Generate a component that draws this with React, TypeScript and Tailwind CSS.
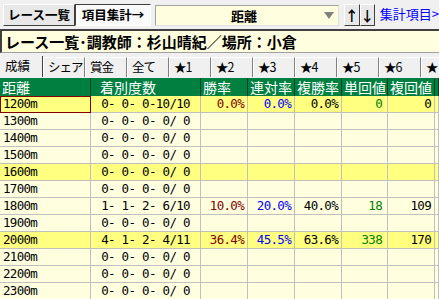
import React from "react";

const JP = "'Noto Sans CJK JP', sans-serif";
const MONO = "'DejaVu Sans Mono', 'Noto Sans CJK JP', monospace";

type Row = {
  d: string;
  c: string;
  w?: string;
  r?: string;
  f?: string;
  t?: string;
  fu?: string;
  hi?: boolean;
};

const rows: Row[] = [
  { d: "1200m", c: "0- 0- 0-10/10", w: "0.0%", r: "0.0%", f: "0.0%", t: "0", fu: "0", hi: true },
  { d: "1300m", c: "0- 0- 0- 0/ 0" },
  { d: "1400m", c: "0- 0- 0- 0/ 0" },
  { d: "1500m", c: "0- 0- 0- 0/ 0" },
  { d: "1600m", c: "0- 0- 0- 0/ 0", hi: true },
  { d: "1700m", c: "0- 0- 0- 0/ 0" },
  { d: "1800m", c: "1- 1- 2- 6/10", w: "10.0%", r: "20.0%", f: "40.0%", t: "18", fu: "109" },
  { d: "1900m", c: "0- 0- 0- 0/ 0" },
  { d: "2000m", c: "4- 1- 2- 4/11", w: "36.4%", r: "45.5%", f: "63.6%", t: "338", fu: "170", hi: true },
  { d: "2100m", c: "0- 0- 0- 0/ 0" },
  { d: "2200m", c: "0- 0- 0- 0/ 0" },
  { d: "2300m", c: "0- 0- 0- 0/ 0" },
];

const tabs = ["成績", "シェア", "賞金", "全て", "★1", "★2", "★3", "★4", "★5", "★6", "★"];
const headers = ["距離", "着別度数", "勝率", "連対率", "複勝率", "単回値", "複回値", ""];

export default function App() {
  return (
    <div
      className="w-[439px] h-[299px] overflow-hidden bg-[#f0f0f0] text-black"
      style={{ fontFamily: JP }}
    >
      {/* top bar */}
      <div className="flex h-[29px] items-start pt-[4px] pl-[3px]">
        <div className="flex h-[22px] w-[73px] items-center justify-center border border-t-white border-l-white border-r-[#404040] border-b-[#404040] bg-[#e8e8e8] text-[12.5px] font-bold leading-none">
          レース一覧
        </div>
        <div className="flex h-[22px] w-[77px] items-center justify-center border border-t-[#404040] border-l-[#404040] border-r-white border-b-white bg-[#fafafa] text-[12.5px] font-bold leading-none">
          項目集計→
        </div>
        <div className="ml-[4px] mt-[1px] flex h-[21px] w-[186px] items-center border border-t-[#a0a0a0] border-l-[#a0a0a0] border-r-[#e0e0e0] border-b-[#e0e0e0] bg-[#ffffe0]">
          <div className="flex-1 pl-[8px] text-center text-[13px] font-bold leading-none">距離</div>
          <svg width="10" height="8" viewBox="0 0 10 8" className="mr-[4px]">
            <polygon points="0,0 10,0 5,7" fill="#808080" />
          </svg>
        </div>
        <div className="ml-[5px] flex h-[22px] w-[16px] items-center justify-center border border-t-white border-l-white border-r-[#404040] border-b-[#404040] bg-[#e8e8e8] text-[14px] font-bold leading-none">
          ↑
        </div>
        <div className="flex h-[22px] w-[15px] items-center justify-center border border-t-white border-l-white border-r-[#404040] border-b-[#404040] bg-[#e8e8e8] text-[14px] font-bold leading-none">
          ↓
        </div>
        <div className="ml-[5px] mt-[3px] whitespace-nowrap text-[13px] leading-none text-[#0000ff]">
          集計項目&gt;
        </div>
      </div>

      {/* title */}
      <div className="flex h-[24px] items-center border-t-2 border-l-2 border-b border-t-[#404040] border-l-[#404040] border-b-[#a0a0a0] bg-[#ffffe0] pl-[3px] text-[15px] font-bold leading-none whitespace-nowrap">
        レース一覧･調教師：杉山晴紀／場所：小倉
      </div>

      {/* tabs */}
      <div className="mt-[3px] flex h-[21px] items-end whitespace-nowrap">
        {tabs.map((t, i) => (
          <div
            key={i}
            className={
              i === 0
                ? "flex h-[21px] w-[43px] shrink-0 items-center border-r border-r-[#404040] bg-[#f0f0f0] pl-[5px] text-[12.5px] leading-none"
                : "flex h-[20px] w-[42px] shrink-0 items-center overflow-hidden border-r border-l border-r-[#808080] border-l-white border-t border-t-white bg-[#f0f0f0] pl-[4px] text-[12.5px] leading-none tracking-[-1px]"
            }
          >
            {t}
          </div>
        ))}
      </div>

      {/* grid */}
      <div className="mt-[1px] grid grid-cols-[91px_110px_47px_47px_47px_46px_47px_1fr]">
        {headers.map((h, i) => (
          <div
            key={i}
            className={
              "flex h-[18px] items-center border-r border-r-[#004020] bg-[#008040] text-[14px] leading-none text-white whitespace-nowrap " +
              (i === 1 ? "pl-[9px]" : "pl-[2px]")
            }
          >
            {h}
          </div>
        ))}
        {rows.map((r, idx) => {
          const bg = r.hi ? "bg-[#ffff80]" : "bg-[#ffffe0]";
          const cell = `h-[17px] border-r border-b border-[#c0c0c0] ${bg} flex items-center text-[12.5px] tracking-[-0.7px] leading-none whitespace-pre`;
          return (
            <React.Fragment key={idx}>
              <div
                className={
                  idx === 0
                    ? `h-[17px] border border-[#800000] ${bg} flex items-center pl-[2px] text-[12.5px] tracking-[-0.7px] leading-none whitespace-pre`
                    : `${cell} pl-[3px]`
                }
                style={{ fontFamily: MONO }}
              >
                {r.d}
              </div>
              <div className={`${cell} justify-center`} style={{ fontFamily: MONO }}>
                {r.c}
              </div>
              <div className={`${cell} justify-end pr-[3px] text-[#800000]`} style={{ fontFamily: MONO }}>
                {r.w ?? ""}
              </div>
              <div className={`${cell} justify-end pr-[3px] text-[#0000ff]`} style={{ fontFamily: MONO }}>
                {r.r ?? ""}
              </div>
              <div className={`${cell} justify-end pr-[3px]`} style={{ fontFamily: MONO }}>
                {r.f ?? ""}
              </div>
              <div className={`${cell} justify-end pr-[5px] text-[#008000]`} style={{ fontFamily: MONO }}>
                {r.t ?? ""}
              </div>
              <div className={`${cell} justify-end pr-[3px]`} style={{ fontFamily: MONO }}>
                {r.fu ?? ""}
              </div>
              <div className={cell}></div>
            </React.Fragment>
          );
        })}
      </div>
    </div>
  );
}
